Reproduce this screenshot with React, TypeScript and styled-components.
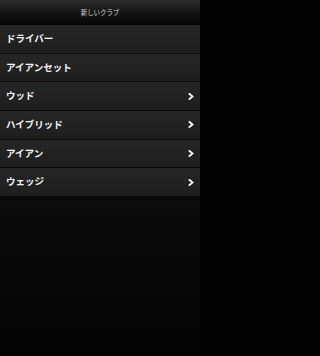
import React, { FC } from "react";
import styled, { createGlobalStyle } from "styled-components";

const GlobalStyle = createGlobalStyle`
  html, body {
    margin: 0;
    padding: 0;
    background: #030303;
  }
  body {
    font-family: "Noto Sans CJK JP", "Noto Sans", sans-serif;
  }
`;

const Screen = styled.div`
  width: 200px;
  height: 356px;
  display: flex;
  flex-direction: column;
  background: linear-gradient(to bottom, #141414 0%, #0f0f0f 40%, #030303 100%);
  overflow: hidden;
`;

const Header = styled.div`
  height: 25px;
  flex: none;
  display: flex;
  align-items: center;
  justify-content: center;
  background: linear-gradient(to bottom, #2c2c2c 0%, #161616 50%, #050505 100%);
  border-bottom: 1px solid #000;
  box-sizing: border-box;
`;

const Title = styled.span`
  color: #d8d8d8;
  font-size: 6.5px;
  letter-spacing: -0.1px;
  line-height: 1;
`;

const List = styled.ul`
  list-style: none;
  margin: 0;
  padding: 0;
`;

const Row = styled.li`
  height: 28.67px;
  box-sizing: border-box;
  display: flex;
  align-items: center;
  justify-content: space-between;
  padding: 0 6px;
  background: linear-gradient(to bottom, #262626 0%, #1e1e1e 100%);
  border-bottom: 1.5px solid #0b0b0b;
`;

const Label = styled.span`
  color: #f4f4f4;
  font-size: 9.5px;
  font-weight: bold;
  line-height: 1;
`;

const Chevron: FC = () => (
  <svg width="6" height="7" viewBox="0 0 6 7">
    <polyline
      points="1.5,1 4.5,3.5 1.5,6"
      fill="none"
      stroke="#fff"
      strokeWidth="1.8"
      strokeLinecap="square"
    />
  </svg>
);

const items = [
  { label: "ドライバー", more: false },
  { label: "アイアンセット", more: false },
  { label: "ウッド", more: true },
  { label: "ハイブリッド", more: true },
  { label: "アイアン", more: true },
  { label: "ウェッジ", more: true },
];

const App: FC = () => (
  <>
    <GlobalStyle />
    <Screen>
      <Header>
        <Title>新しいクラブ</Title>
      </Header>
      <List>
        {items.map((item) => (
          <Row key={item.label}>
            <Label>{item.label}</Label>
            {item.more && <Chevron />}
          </Row>
        ))}
      </List>
    </Screen>
  </>
);

export default App;
